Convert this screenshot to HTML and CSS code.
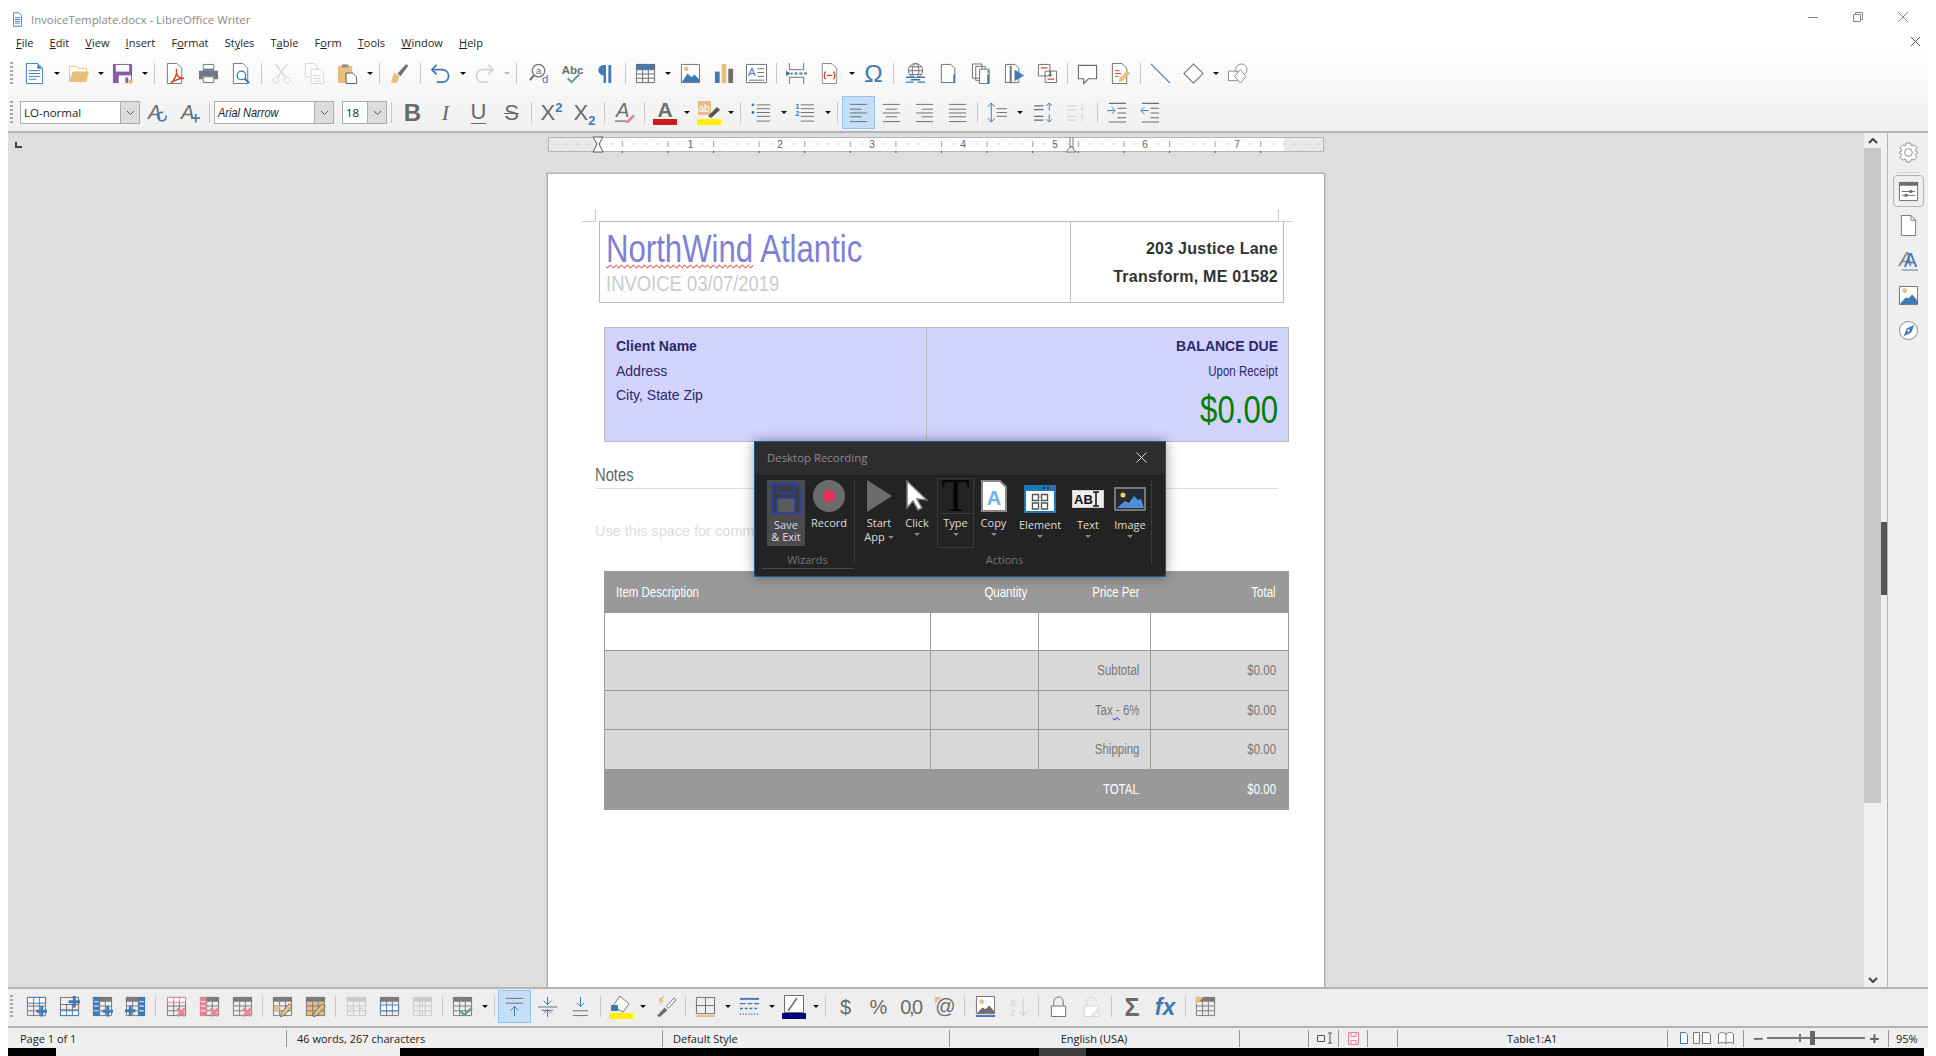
FILE: index.html
```html
<!DOCTYPE html>
<html lang="en">
<head>
<meta charset="utf-8">
<title>InvoiceTemplate.docx - LibreOffice Writer</title>
<link rel="stylesheet" href="styles.css">
</head>
<body>

<svg class="defs" aria-hidden="true">
  <symbol id="grid" viewBox="0 0 22 22"><path d="M1.5 1.500h19v19h-19zM1.5 9h19M1.5 14.500h19M8 8v12.500M14 8v12.500" fill="none" stroke="#6e6e6e"/></symbol>
  <symbol id="hgrid" viewBox="0 0 22 22"><path d="M1 1h20v5H1z" fill="#7a7a7a"/><path d="M1.5 1.500h19v19h-19zM1.5 10.500h19M1.5 15.500h19M8 6v14.500M14 6v14.500" fill="none" stroke="#7a7a7a"/></symbol>
  <symbol id="plus" viewBox="0 0 22 22"><path d="M11 16h11M16.500 10.500v11" stroke="#3f7ab5" stroke-width="3"/></symbol>
  <symbol id="cross" viewBox="0 0 22 22"><path d="M12 13l8 8M20 13l-8 8" stroke="#e8829a" stroke-width="3"/></symbol>
  <symbol id="brush" viewBox="0 0 22 22"><path d="M21 11l-8 9-4 2 1-5 8-9z" fill="#e8bf7f" stroke="#6e6e6e"/></symbol>
</svg>

<div class="app">
  <div class="top">
    <div class="titlebar">
      <svg class="appicon" viewBox="0 0 10 16"><path d="M.5.5h6l3 3v12H.5z" fill="#fff" stroke="#2f7fc1"/><path d="M2 6h6M2 8h6M2 10h6M2 12h6" stroke="#2f7fc1"/></svg>
      <span class="titletext">InvoiceTemplate.docx - LibreOffice Writer</span>
      <span class="wincontrols">
        <svg width="10" height="10"><path d="M0 5.500h10" stroke="#888"/></svg>
        <svg width="10" height="10"><path d="M.5 2.500h7v7h-7zM2.500 2.500v-2h7v7h-2" fill="none" stroke="#888"/></svg>
        <svg width="10" height="10"><path d="M0 0l10 10M10 0L0 10" stroke="#888"/></svg>
      </span>
    </div>
    <div class="menubar">
      <span class="menu"><u>F</u>ile</span><span class="menu"><u>E</u>dit</span><span class="menu"><u>V</u>iew</span><span class="menu"><u>I</u>nsert</span><span class="menu">F<u>o</u>rmat</span><span class="menu">St<u>y</u>les</span><span class="menu">T<u>a</u>ble</span><span class="menu">F<u>o</u>rm</span><span class="menu"><u>T</u>ools</span><span class="menu"><u>W</u>indow</span><span class="menu"><u>H</u>elp</span>
      <svg class="docclose" width="9" height="9"><path d="M0 0l9 9M9 0L0 9" stroke="#555"/></svg>
    </div>

    <div class="tb tb1">
      <span class="grip"></span>
      <span class="btn"><svg class="i" viewBox="0 0 22 22"><path d="M2.500 .5h12l5 5v16h-17z" fill="#fff" stroke="#3f7ab5"/><path d="M14 1v5h5z" fill="#3f7ab5"/><path d="M5 8h12M5 11h12M5 14h12M5 17h8" stroke="#3f7ab5"/></svg></span><span class="arr"></span>
      <span class="btn"><svg class="i" viewBox="0 0 22 22"><path d="M1.500 19V3.500h7l2 2h9V19" fill="#fff" stroke="#e8bf7f"/><path d="M5 9h17l-3 11H1z" fill="#e8bf7f"/></svg></span><span class="arr"></span>
      <span class="btn"><svg class="i" viewBox="0 0 22 22"><path d="M1 1h20v20H1z" fill="#8a5ca8"/><path d="M4 2h14v7H4z" fill="#fff"/><path d="M7 13h13v8H7z" fill="#fff"/><path d="M14 15h3v6h-3z" fill="#8a5ca8"/><circle cx="19.500" cy="19.500" r="2.500" fill="#e8bf7f"/></svg></span><span class="arr"></span><span class="sep"></span>
      <span class="btn"><svg class="i" viewBox="0 0 22 22"><path d="M2.500 .5h10l5 5v16h-15z" fill="#fff" stroke="#777"/><path d="M12 6v5M12 11c-1 4-3 8-6 10 3-2 8-5 14-5-4 0-7-2-8-5z" fill="none" stroke="#d9442b" stroke-width="1.500"/></svg></span>
      <span class="btn"><svg class="i" viewBox="0 0 22 22"><path d="M5.500 1.500h11v7h-11z" fill="#fff" stroke="#6e6e6e"/><path d="M6 6h10v2H6z" fill="#3f7ab5"/><path d="M1 8h20v9h-4v-3H5v3H1z" fill="#777"/><path d="M5.500 14.500h11v6h-11z" fill="#fff" stroke="#6e6e6e"/></svg></span>
      <span class="btn"><svg class="i" viewBox="0 0 22 22"><path d="M2.500 .5h10l5 5v16h-15z" fill="#fff" stroke="#777"/><circle cx="11" cy="13" r="4.500" fill="#fff" stroke="#3f7ab5" stroke-width="1.400"/><path d="M14 16l5 5" stroke="#3f7ab5" stroke-width="2"/></svg></span><span class="sep"></span>
      <span class="btn"><svg class="i" viewBox="0 0 22 22"><g fill="none" stroke="#d4d4d4" stroke-width="1.300"><path d="M5 1l10 14M17 1L7 15"/><circle cx="5" cy="18" r="3" stroke-dasharray="2 1"/><circle cx="17" cy="18" r="3" stroke-dasharray="2 1"/></g></svg></span>
      <span class="btn"><svg class="i" viewBox="0 0 22 22"><g fill="#fff" stroke="#d4d4d4"><path d="M1.500 .5h9l3 3v11h-12z"/><path d="M7.500 6.500h9l4 4v11h-13z"/><path d="M10 13h8M10 16h8M10 19h8"/></g></svg></span>
      <span class="btn"><svg class="i" viewBox="0 0 22 22"><path d="M1 3h15v18H1z" fill="#e8bf7f"/><path d="M5 1.500h7v3H5z" fill="#8a8a8a"/><path d="M9.500 10.500h7l4 4v7h-11z" fill="#fff" stroke="#555"/></svg></span><span class="arr"></span><span class="sep"></span>
      <span class="btn"><svg class="i" viewBox="0 0 22 22"><path d="M4 10l6 4-3 7H1z" fill="#e8bf7f"/><path d="M8 11l9-10 2 2-8 11z" fill="#6e6e6e"/></svg></span><span class="sep"></span>
      <span class="btn"><svg class="i" viewBox="0 0 22 22"><path d="M7 2L2 7l5 5" fill="none" stroke="#3f7ab5" stroke-width="1.800"/><path d="M2 7h11a6.500 6.500 0 0 1 0 13H7" fill="none" stroke="#3f7ab5" stroke-width="1.800"/></svg></span><span class="arr"></span>
      <span class="btn"><svg class="i" viewBox="0 0 22 22"><path d="M15 2l5 5-5 5" fill="none" stroke="#d4d4d4" stroke-width="1.800"/><path d="M20 7H9a6.500 6.500 0 0 0 0 13h6" fill="none" stroke="#d4d4d4" stroke-width="1.800"/></svg></span><span class="arr off"></span><span class="sep sep-f"></span>
      <span class="btn"><svg class="i" viewBox="0 0 22 22"><circle cx="10" cy="8" r="6.500" fill="none" stroke="#6e6e6e" stroke-width="1.200"/><path d="M5 13l-4 5" stroke="#6e6e6e" stroke-width="2.200"/><text x="10" y="11" class="glyph small" fill="#6e6e6e">a</text><text x="17" y="21" class="glyph" fill="#3f7ab5">d</text></svg></span>
      <span class="btn"><svg class="i" viewBox="0 0 22 22"><text x="11" y="11" class="glyph spell" fill="#6e6e6e">Abc</text><path d="M6 16l4 4 8-8" fill="none" stroke="#5f9f86" stroke-width="2"/></svg></span>
      <span class="btn"><svg class="i" viewBox="0 0 22 22"><path d="M9 2a5.500 5.500 0 0 0 0 11v8h2.500V2zM14 2h3v19h-3z" fill="#3f7ab5"/></svg></span><span class="sep"></span>
      <span class="btn"><svg class="i" viewBox="0 0 22 22"><path d="M1 1h20v6H1z" fill="#3f7ab5"/><path d="M1.500 1.500h19v19h-19zM1.500 7h19M1.500 11.500h19M1.500 16h19M8 7v13.500M14 7v13.500" fill="none" stroke="#6e6e6e"/></svg></span><span class="arr"></span>
      <span class="m1"></span>
      <span class="btn"><svg class="i" viewBox="0 0 22 22"><path d="M1.500 1.500h19v19h-19z" fill="#fff" stroke="#6e6e6e"/><circle cx="6.500" cy="6" r="2.500" fill="#e8bf7f"/><path d="M2 20l6-9 4 4 3-3 5 5v3z" fill="#3f7ab5"/></svg></span>
      <span class="btn"><svg class="i" viewBox="0 0 22 22"><path d="M2 9h5v12H2z" fill="#3f7ab5"/><path d="M9 1h5v20H9z" fill="#e8bf7f"/><path d="M16 6h5v15h-5z" fill="#6e6e6e"/></svg></span>
      <span class="btn"><svg class="i" viewBox="0 0 22 22"><path d="M.5 1.500h21v19H.5z" fill="#fff" stroke="#6e6e6e"/><text x="6" y="14" class="glyph" fill="#3f7ab5">A</text><path d="M12 6h7M12 10h7M12 14h7M3 18h16" stroke="#6e6e6e"/></svg></span><span class="sep"></span>
      <span class="btn"><svg class="i" viewBox="0 0 22 22"><path d="M3.500 0v7h15V0M3.500 22v-7h15v7" fill="none" stroke="#6e6e6e"/><path d="M0 8l5 3-5 3z" fill="#3f7ab5"/><path d="M5 11h2M9 11h3M14 11h3M19 11h3" stroke="#3f7ab5" stroke-width="2"/></svg></span>
      <span class="btn"><svg class="i" viewBox="0 0 22 22"><path d="M3.500 .5h10l5 5v16h-15z" fill="#fff" stroke="#888"/><path d="M7 9c-2 2-2 6 0 8M15 9c2 2 2 6 0 8M8 13h6" fill="none" stroke="#d9442b" stroke-width="1.400"/></svg></span><span class="arr"></span>
      <span class="btn"><svg class="i" viewBox="0 0 22 22"><text x="11" y="20" class="glyph omega" fill="#3f7ab5">Ω</text></svg></span><span class="sep"></span>
      <span class="m2"></span>
      <span class="btn"><svg class="i" viewBox="0 0 22 22"><g fill="none" stroke="#6e6e6e"><circle cx="11" cy="8" r="7.500"/><ellipse cx="11" cy="8" rx="3.500" ry="7.500"/><path d="M3.500 8h15M4.500 4h13M4.500 12h13"/></g><path d="M1 15h8M13 15h8M1 20h8M13 20h8M6 17.500h10" stroke="#3f7ab5" stroke-width="1.500"/></svg></span>
      <span class="btn"><svg class="i" viewBox="0 0 22 22"><path d="M3.500 1.500h10l4 4v15h-14z" fill="#fff" stroke="#6e6e6e"/><path d="M16 12h2v9h-2z" fill="#3f7ab5"/></svg></span>
      <span class="btn"><svg class="i" viewBox="0 0 22 22"><path d="M1.500 1h10v15h-10zM5 3.500h10v15H5z" fill="#fff" stroke="#6e6e6e"/><path d="M9 6.500h10v15H9z" fill="#fff" stroke="#6e6e6e"/><path d="M17 12h2v9h-2zM17 8h2v2h-2z" fill="#3f7ab5"/></svg></span>
      <span class="btn"><svg class="i" viewBox="0 0 22 22"><path d="M1.500 1.500h10l4 4v15h-14z" fill="#fff" stroke="#6e6e6e"/><path d="M7 3v18" stroke="#6e6e6e" stroke-width="2"/><path d="M11 7l10 6-10 6z" fill="#3f7ab5"/></svg></span>
      <span class="btn"><svg class="i" viewBox="0 0 22 22"><path d="M1.500 1.500h12v12h-12zM8.500 8.500h12v12h-12z" fill="#fff" stroke="#6e6e6e"/><path d="M4 5h7M11 17h7" stroke="#d9442b" stroke-width="1.300"/><path d="M14 8v6M12 12l2 2 2-2" fill="none" stroke="#555"/></svg></span><span class="sep"></span>
      <span class="btn"><svg class="i" viewBox="0 0 22 22"><path d="M1.500 2.500h19v14H12l-5 5v-5H1.500z" fill="#fff" stroke="#6e6e6e" stroke-width="1.200"/></svg></span>
      <span class="btn"><svg class="i" viewBox="0 0 22 22"><path d="M2.500 .5h10l5 5v16h-15z" fill="#fff" stroke="#6e6e6e"/><path d="M5 8h5M5 11h7M5 14h4" stroke="#d9442b"/><path d="M9 20l1-4 8-8 3 3-8 8z" fill="#e8bf7f"/></svg></span><span class="sep"></span>
      <span class="btn"><svg class="i" viewBox="0 0 22 22"><path d="M1 1l20 20" stroke="#3f7ab5" stroke-width="1.200"/></svg></span>
      <span class="btn"><svg class="i" viewBox="0 0 22 22"><path d="M11 1l10 10-10 10L1 11z" fill="#fff" stroke="#888" stroke-width="1.300"/></svg></span><span class="arr"></span>
      <span class="btn"><svg class="i" viewBox="0 0 22 22"><circle cx="15" cy="7" r="6" fill="#fff" stroke="#888"/><path d="M1.500 8.500h10v10h-10z" fill="#fff" stroke="#888"/><path d="M14 7l6 7-6 7-6-7z" fill="#fff" stroke="#888"/></svg></span>
    </div>

    <div class="tb tb2">
      <span class="grip"></span>
      <span class="combo c-style"><span class="combotext">LO-normal</span><span class="drop"><svg width="9" height="6"><path d="M1 1l3.500 3.500L8 1" fill="none" stroke="#555"/></svg></span></span>
      <span class="btn"><svg class="i" viewBox="0 0 22 22"><text x="9" y="18" class="glyph big ital" fill="#6e6e6e">A</text><path d="M21 14a4.500 4.500 0 1 1-3-3" fill="none" stroke="#3f7ab5" stroke-width="1.600"/></svg></span>
      <span class="btn"><svg class="i" viewBox="0 0 22 22"><text x="9" y="18" class="glyph big ital" fill="#6e6e6e">A</text><path d="M13 17h9M17.500 12.500v9" stroke="#3f7ab5" stroke-width="1.800"/></svg></span><span class="sep"></span>
      <span class="combo c-font"><span class="combotext fontname"><span class="fn">Arial Narrow</span></span><span class="drop"><svg width="9" height="6"><path d="M1 1l3.500 3.500L8 1" fill="none" stroke="#555"/></svg></span></span>
      <span class="combo c-size"><span class="combotext">18</span><span class="drop"><svg width="9" height="6"><path d="M1 1l3.500 3.500L8 1" fill="none" stroke="#555"/></svg></span></span>
      <span class="sep sep-s"></span>
      <span class="btn"><span class="fmt fmt-b">B</span></span>
      <span class="btn"><span class="fmt fmt-i">I</span></span>
      <span class="btn"><span class="fmt fmt-u">U</span></span>
      <span class="btn"><span class="fmt fmt-s">S</span></span><span class="sep"></span>
      <span class="btn"><span class="fmt fmt-x">X<sup>2</sup></span></span>
      <span class="btn"><span class="fmt fmt-x">X<sub>2</sub></span></span><span class="sep"></span>
      <span class="btn"><svg class="i" viewBox="0 0 22 22"><text x="9" y="16" class="glyph big ital" fill="#6e6e6e">A</text><path d="M1 20h12" stroke="#6e6e6e" stroke-width="1.300"/><path d="M13 20l7-7 2 2-7 7h-3z" fill="#e8829a"/></svg></span><span class="sep"></span>
      <span class="btn"><svg class="i wide" viewBox="0 0 24 24"><text x="12" y="16" class="glyph big bold" fill="#6e6e6e">A</text><path d="M0 18h24v6H0z" fill="#cc1a1a"/></svg></span><span class="arr"></span>
      <span class="btn"><svg class="i wide" viewBox="0 0 24 24"><path d="M1 0h13v14H1z" fill="#e8bf7f"/><text x="7" y="11" class="glyph small" fill="#fff">ab</text><path d="M11 15l9-9 3 3-9 8z" fill="#555"/><path d="M0 18h24v6H0z" fill="#ffef00"/></svg></span><span class="arr"></span><span class="sep"></span>
      <span class="btn"><svg class="i" viewBox="0 0 22 22"><circle cx="2" cy="3" r="1.500" fill="#3f7ab5"/><circle cx="2" cy="11" r="1.500" fill="#3f7ab5"/><path d="M6 3h14M6 7h14M6 11h14M6 15h14M6 20h14" stroke="#6e6e6e"/></svg></span><span class="arr"></span>
      <span class="btn"><svg class="i" viewBox="0 0 22 22"><text x="2.500" y="7" class="glyph tiny bold" fill="#3f7ab5">1</text><text x="2.500" y="15" class="glyph tiny bold" fill="#3f7ab5">2</text><path d="M6 3h14M6 7h14M6 11h14M6 15h14M6 20h14" stroke="#6e6e6e"/></svg></span><span class="arr"></span><span class="sep"></span>
      <span class="btn on"><svg class="i" viewBox="0 0 22 22"><path d="M2 2.500h18M2 7.500h12M2 11.500h18M2 15.500h12M2 20.500h18" stroke="#6e6e6e"/></svg></span>
      <span class="btn"><svg class="i" viewBox="0 0 22 22"><path d="M2 2.500h18M5 7.500h12M2 11.500h18M5 15.500h12M2 20.500h18" stroke="#6e6e6e"/></svg></span>
      <span class="btn"><svg class="i" viewBox="0 0 22 22"><path d="M2 2.500h18M8 7.500h12M2 11.500h18M8 15.500h12M2 20.500h18" stroke="#6e6e6e"/></svg></span>
      <span class="btn"><svg class="i" viewBox="0 0 22 22"><path d="M2 2.500h18M2 7.500h18M2 11.500h18M2 15.500h18M2 20.500h18" stroke="#6e6e6e"/></svg></span><span class="sep"></span>
      <span class="btn"><svg class="i" viewBox="0 0 22 22"><path d="M10 7h11M10 11h11M10 15h11" stroke="#6e6e6e"/><path d="M4.500 1v20M1 5l3.500-4L8 5M1 17l3.500 4L8 17" fill="none" stroke="#3f7ab5"/></svg></span><span class="arr"></span>
      <span class="m3"></span>
      <span class="btn"><svg class="i" viewBox="0 0 22 22"><path d="M0 4h10M0 8h10M0 15h10M0 19h10" stroke="#6e6e6e" stroke-width="1.300"/><path d="M16 9V1M13 4l3-3 3 3M16 13v8M13 18l3 3 3-3" fill="none" stroke="#3f7ab5"/></svg></span>
      <span class="btn"><svg class="i" viewBox="0 0 22 22"><path d="M0 4h10M0 8h10M0 15h10M0 19h10" stroke="#d4d4d4" stroke-width="1.300"/><path d="M16 1v8M13 6l3 3 3-3M16 21v-8M13 16l3-3 3 3" fill="none" stroke="#d4d4d4"/></svg></span><span class="sep"></span>
      <span class="btn"><svg class="i" viewBox="0 0 22 22"><path d="M2 1.500h18M11 6.500h9M11 11.500h9M11 16.500h9M2 21h18" stroke="#6e6e6e" stroke-width="1.200"/><path d="M0 9h8M5 5.500L8.500 9 5 12.500" fill="none" stroke="#3f7ab5"/></svg></span>
      <span class="btn"><svg class="i" viewBox="0 0 22 22"><path d="M2 1.500h18M11 6.500h9M11 11.500h9M11 16.500h9M2 21h18" stroke="#6e6e6e" stroke-width="1.200"/><path d="M9 9H1M4.500 5.500L1 9l3.500 3.500" fill="none" stroke="#3f7ab5"/></svg></span>
    </div>
  </div>

  <div class="main">
    <div class="canvas">
      <div class="rulerrow">
        <svg class="corner" width="8" height="8"><path d="M1 1v5h6" fill="none" stroke="#444" stroke-width="2"/></svg>
        <svg class="ruler" width="776" height="17" viewBox="0 0 776 17">
          <defs>
            <pattern id="dots" x="5.400" width="11.400" height="17" patternUnits="userSpaceOnUse"><path d="M1 7.500v1" stroke="#888"/></pattern>
            <pattern id="tick" x="28.200" width="45.600" height="17" patternUnits="userSpaceOnUse"><path d="M.5 5v6" stroke="#aaa"/><path d="M.5 15v2" stroke="#555"/></pattern>
          </defs>
          <rect x=".5" y="1.500" width="775" height="14" fill="#e9e9e9" stroke="#b5b5b5"/>
          <rect x="51" y="2" width="685" height="13" fill="#fff"/>
          <rect x="1" y="2" width="774" height="13" fill="url(#dots)"/>
          <rect x="51" y="0" width="685" height="17" fill="url(#tick)"/>
          <g class="rulernum">
            <text x="142.500" y="12">1</text><text x="232" y="12">2</text><text x="324" y="12">3</text><text x="415" y="12">4</text><text x="507" y="12">5</text><text x="597" y="12">6</text><text x="689" y="12">7</text>
          </g>
          <path d="M45 1h10l-4 7 4 8H45l4-8z" fill="#fff" stroke="#555"/>
          <path d="M522 1v11M525 1v11M518 16l5-6 5 6z" fill="#eee" stroke="#777"/>
        </svg>
      </div>

      <div class="sheet">
        <span class="crop crop-l"></span><span class="crop crop-r"></span>

        <div class="headbox">
          <div class="headleft">
            <div class="company"><span class="nw"><span class="squiggle">NorthWind</span> Atlantic</span></div>
            <div class="invoice"><span class="nw">INVOICE 03/07/2019</span></div>
          </div>
          <div class="headright">
            <div class="addr">203 Justice Lane</div>
            <div class="addr">Transform, ME 01582</div>
          </div>
        </div>

        <div class="clientbox">
          <div class="clientleft">
            <div class="cname">Client Name</div>
            <div class="cline">Address</div>
            <div class="cline">City, State Zip</div>
          </div>
          <div class="clientright">
            <div class="cname">BALANCE DUE</div>
            <div class="cline receipt"><span class="nwr">Upon Receipt</span></div>
            <div class="amount"><span class="nwr">$0.00</span></div>
          </div>
        </div>

        <div class="notes"><span class="nw">Notes</span></div>
        <div class="notehint">Use this space for comments</div>

        <table class="items">
          <colgroup><col class="col1"><col class="col2"><col class="col3"><col class="col4"></colgroup>
          <tr class="rowhead"><td><span class="nw">Item Description</span></td><td class="r"><span class="nwr">Quantity</span></td><td class="r"><span class="nwr">Price Per</span></td><td class="r"><span class="nwr">Total</span></td></tr>
          <tr class="rowblank"><td></td><td></td><td></td><td></td></tr>
          <tr class="rowgray"><td></td><td></td><td class="r"><span class="nwr">Subtotal</span></td><td class="r"><span class="nwr">$0.00</span></td></tr>
          <tr class="rowgray"><td></td><td></td><td class="r"><span class="nwr">Tax<span class="squiggle-b"> -</span> 6%</span></td><td class="r"><span class="nwr">$0.00</span></td></tr>
          <tr class="rowgray"><td></td><td></td><td class="r"><span class="nwr">Shipping</span></td><td class="r"><span class="nwr">$0.00</span></td></tr>
          <tr class="rowtotal"><td></td><td></td><td class="r"><span class="nwr">TOTAL</span></td><td class="r"><span class="nwr">$0.00</span></td></tr>
        </table>
      </div>
    </div>

    <div class="vscroll">
      <span class="sbtn"><svg width="10" height="6"><path d="M1 5l4-4 4 4" fill="none" stroke="#444" stroke-width="2"/></svg></span>
      <span class="sthumb"></span>
      <span class="strack"></span>
      <span class="sbtn sbtn-d"><svg width="10" height="6"><path d="M1 1l4 4 4-4" fill="none" stroke="#444" stroke-width="2"/></svg></span>
    </div>
    <div class="sidegrip"><span class="gripbar"></span></div>
    <div class="sidebar">
      <span class="sbi"><svg class="i" viewBox="0 0 22 22"><path d="M9 1h4l1 3 3-1 3 3-2 3 3 2v0l-3 2 2 3-3 3-3-1-1 3H9l-1-3-3 1-3-3 2-3-3-2 3-2-2-3 3-3 3 1z" fill="#fff" stroke="#888"/><circle cx="11" cy="11" r="4" fill="#fff" stroke="#888"/></svg></span>
      <span class="sbline"></span>
      <span class="sbi sbi-on"><svg class="i" viewBox="0 0 22 22"><path d="M1.500 1.500h19v19h-19z" fill="#fff" stroke="#6e6e6e"/><path d="M1 1h20v4H1z" fill="#6e6e6e"/><path d="M4 11h14M4 15h14" stroke="#6e6e6e"/><path d="M12 9.500h3v3h-3zM7 13.500h3v3H7z" fill="#6e6e6e"/></svg></span>
      <span class="sbi"><svg class="i" viewBox="0 0 22 22"><path d="M3.500 .5h10l5 5v16h-15z" fill="#fff" stroke="#777"/><path d="M13.500 .5v5h5" fill="none" stroke="#777"/></svg></span>
      <span class="sbi"><svg class="i" viewBox="0 0 22 22"><text x="8" y="17" class="glyph big ital" fill="#888">A</text><text x="13" y="18" class="glyph big" fill="#3f7ab5">A</text><path d="M4 21h17" stroke="#3f7ab5"/></svg></span>
      <span class="sbi"><svg class="i" viewBox="0 0 22 22"><path d="M1.500 1.500h19v19h-19z" fill="#fff" stroke="#6e6e6e"/><circle cx="7" cy="6" r="2.500" fill="#e8bf7f"/><path d="M2 20l6-7 3 1 4-4 5 6v4z" fill="#3f7ab5"/></svg></span>
      <span class="sbi"><svg class="i" viewBox="0 0 22 22"><circle cx="11" cy="11" r="9.500" fill="#fff" stroke="#888"/><path d="M17 5l-3 8-8 4 3-8z" fill="#3f7ab5"/><circle cx="11" cy="11" r="1.300" fill="#fff"/></svg></span>
    </div>
  </div>

  <div class="tb tb3">
    <span class="grip"></span>
    <span class="btn"><svg class="i" viewBox="0 0 22 22"><use href="#hgrid"/><path d="M1.500 1.500h19v6h-19zM8 1.500v6M14 1.500v6" fill="#fff" stroke="#3f7ab5"/><use href="#plus"/></svg></span>
    <span class="btn"><svg class="i" viewBox="0 0 22 22"><use href="#grid"/><path d="M1.500 15.500h19v5h-19zM8 15.500v5M14 15.500v5" fill="#fff" stroke="#3f7ab5"/><path d="M10 6h12M16 0v12" stroke="#3f7ab5" stroke-width="3"/></svg></span>
    <span class="btn"><svg class="i" viewBox="0 0 22 22"><use href="#hgrid"/><path d="M1 1h7v20H1z" fill="#3f7ab5"/><path d="M2 6h5M2 10.500h5M2 15.500h5" stroke="#fff"/><use href="#plus"/></svg></span>
    <span class="btn"><svg class="i" viewBox="0 0 22 22"><use href="#hgrid"/><path d="M14 1h7v20h-7z" fill="#3f7ab5"/><path d="M15 6h5M15 10.500h5M15 15.500h5" stroke="#fff"/><path d="M0 15.500h11M5.500 10v11" stroke="#3f7ab5" stroke-width="3"/></svg></span><span class="sep sep-w"></span>
    <span class="btn"><svg class="i" viewBox="0 0 22 22"><use href="#hgrid"/><path d="M1.500 1.500h19v5h-19zM8 1.500v5M14 1.500v5" fill="#fff" stroke="#e8829a"/><use href="#cross"/></svg></span>
    <span class="btn"><svg class="i" viewBox="0 0 22 22"><use href="#hgrid"/><path d="M1 1h7v20H1z" fill="#e8829a"/><path d="M2 6h5M2 10.500h5M2 15.500h5" stroke="#fff"/><use href="#cross"/></svg></span>
    <span class="btn"><svg class="i" viewBox="0 0 22 22"><use href="#hgrid"/><use href="#cross"/></svg></span><span class="sep"></span>
    <span class="btn"><svg class="i" viewBox="0 0 22 22"><use href="#hgrid"/><path d="M2 10.500h6v5H2z" fill="#e8bf7f"/><use href="#brush"/></svg></span>
    <span class="btn"><svg class="i" viewBox="0 0 22 22"><path d="M1 6h20v15H1z" fill="#e8bf7f"/><use href="#hgrid"/><use href="#brush"/></svg></span><span class="sep"></span>
    <span class="btn dim"><svg class="i" viewBox="0 0 22 22"><use href="#hgrid"/><path d="M4 13h5M18 13h-5" stroke="#6e6e6e"/></svg></span>
    <span class="btn"><svg class="i" viewBox="0 0 22 22"><use href="#hgrid"/><path d="M1.500 9.500h19v6h-19zM8 9.500v6M14 9.500v6" fill="#fff" stroke="#3f7ab5"/></svg></span>
    <span class="btn dim"><svg class="i" viewBox="0 0 22 22"><use href="#hgrid"/><path d="M11 7v5M11 20v-5" stroke="#6e6e6e"/></svg></span><span class="sep"></span>
    <span class="btn"><svg class="i" viewBox="0 0 22 22"><use href="#hgrid"/><path d="M9 16l4 4 8-8" fill="none" stroke="#5f9f86" stroke-width="2.200"/></svg></span><span class="arr"></span><span class="sep"></span>
    <span class="btn on"><svg class="i" viewBox="0 0 22 22"><path d="M2 2.500h18M2 7.500h18" stroke="#6e6e6e"/><path d="M11 21V11M7 15l4-4 4 4" fill="none" stroke="#3f7ab5"/></svg></span>
    <span class="btn"><svg class="i" viewBox="0 0 22 22"><path d="M1 11.500h20M5 15h12" stroke="#6e6e6e"/><path d="M11 1v8M7 5l4 4 4-4M11 22v-7M7 18l4-4 4 4" fill="none" stroke="#3f7ab5"/></svg></span>
    <span class="btn"><svg class="i" viewBox="0 0 22 22"><path d="M3 15.500h16M3 20.500h16" stroke="#6e6e6e"/><path d="M11 1v10M7 7l4 4 4-4" fill="none" stroke="#3f7ab5"/></svg></span><span class="sep"></span>
    <span class="btn"><svg class="i wide" viewBox="0 0 24 24"><path d="M11 1l9 8-6 8-10-6z" fill="#fff" stroke="#777"/><path d="M2 10h7v6H2z" fill="#3f7ab5"/><path d="M0 18h24v6H0z" fill="#ffef00"/></svg></span><span class="arr"></span>
    <span class="btn"><svg class="i" viewBox="0 0 22 22"><path d="M5 2l5-2-3 5 3-1-6 6 2-5-3 1z" fill="#e8bf7f"/><path d="M2 21l8-9 3 3-8 7z" fill="#6e6e6e"/><path d="M12 11l8-9 2 2-8 9z" fill="#fff" stroke="#6e6e6e"/></svg></span><span class="sep"></span>
    <span class="btn"><svg class="i" viewBox="0 0 22 22"><path d="M1.500 1.500h19v17h-19zM11 1.500v17M1.500 10h19" fill="none" stroke="#6e6e6e"/><path d="M1 20h20v2H1z" fill="#e8bf7f"/></svg></span><span class="arr"></span>
    <span class="btn"><svg class="i" viewBox="0 0 22 22"><path d="M1 3h20" stroke="#3f7ab5" stroke-width="2"/><path d="M1 8h6M9 8h5M16 8h5M1 13h3M6 13h3M11 13h3M16 13h3" stroke="#3f7ab5" stroke-width="1.500"/><path d="M1 19h1M4 19h1M7 19h1M10 19h1M13 19h1M16 19h1M19 19h1" stroke="#3f7ab5" stroke-width="2"/></svg></span><span class="arr"></span>
    <span class="btn"><svg class="i wide" viewBox="0 0 24 24"><path d="M2.500 .5h19v17h-19z" fill="#fff" stroke="#6e6e6e"/><path d="M6 16l9-13" stroke="#6e6e6e" stroke-width="1.500"/><path d="M0 18h24v6H0z" fill="#000080"/></svg></span><span class="arr"></span><span class="sep"></span>
    <span class="btn"><span class="fmt fmt-cur">$</span></span>
    <span class="btn"><span class="fmt fmt-cur">%</span></span>
    <span class="btn"><span class="fmt fmt-cur fmt-zero">0,0</span></span>
    <span class="btn"><svg class="i" viewBox="0 0 22 22"><path d="M1 1h7L1 8z" fill="#e8bf7f"/><text x="12" y="18" class="glyph big" fill="#6e6e6e">@</text></svg></span><span class="sep"></span>
    <span class="btn"><svg class="i" viewBox="0 0 22 22"><path d="M1.500 .5h19v18h-19z" fill="#fff" stroke="#6e6e6e"/><circle cx="7" cy="6" r="2.500" fill="#e8bf7f"/><path d="M2 18l6-6 3 2 4-4 5 6v2z" fill="#6e6e6e"/><path d="M1 21h20" stroke="#3f7ab5" stroke-width="2"/></svg></span>
    <span class="btn"><svg class="i" viewBox="0 0 22 22"><text x="5" y="10" class="glyph" fill="#d4d4d4">a</text><text x="5" y="21" class="glyph" fill="#d4d4d4">z</text><path d="M16 1v19M12 16l4 4 4-4" fill="none" stroke="#d4d4d4" stroke-width="1.200"/></svg></span><span class="sep"></span>
    <span class="btn"><svg class="i" viewBox="0 0 22 22"><path d="M3.500 10.500h15v11h-15z" fill="#fff" stroke="#6e6e6e"/><path d="M6 10V6a5 5 0 0 1 10 0v4" fill="none" stroke="#6e6e6e"/></svg></span>
    <span class="btn"><svg class="i" viewBox="0 0 22 22"><path d="M3.500 10.500h15v11h-15z" fill="#fff" stroke="#d4d4d4"/><path d="M6 10V6a5 5 0 0 1 10 0" fill="none" stroke="#d4d4d4"/><path d="M10 20l8-8 3 3-8 7z" fill="#e6e6e6"/></svg></span><span class="sep"></span>
    <span class="btn"><span class="fmt fmt-sum">Σ</span></span>
    <span class="btn"><span class="fmt fmt-fx">fx</span></span><span class="sep"></span>
    <span class="btn"><svg class="i" viewBox="0 0 22 22"><use href="#hgrid"/><path d="M1 1h8L1 9z" fill="#e8bf7f"/></svg></span>
  </div>

  <div class="status">
    <span class="field f1">Page 1 of 1</span>
    <span class="field f2">46 words, 267 characters</span>
    <span class="field f3">Default Style</span>
    <span class="field f4 mid">English (USA)</span>
    <span class="field f5"></span>
    <span class="field f6"><svg width="16" height="12" viewBox="0 0 16 12"><path d="M.5 3.500h7v6h-7zM11 1h4M13 1v10M11 11h4" fill="none" stroke="#555"/></svg></span>
    <span class="field f7"><svg width="11" height="13" viewBox="0 0 11 13"><path d="M.5.5h10v12H.5zM3 .5v4h5v-4M3 12.500v-4h5v4" fill="none" stroke="#e8829a"/></svg></span>
    <span class="field f8"></span>
    <span class="field f9 mid">Table1:A1</span>
    <span class="field f10"><svg width="56" height="12" viewBox="0 0 56 12"><path d="M2.500.5h5l2 2v9h-7z" fill="#fff" stroke="#3f7ab5"/><path d="M15.500.5h6v11h-6zM24.500.5h6l2 2v9h-8z" fill="#fff" stroke="#777"/><path d="M40.500 2c3-2 5-2 7.500 0 2.500-2 5-2 7.500 0v9.500c-2.500-1.500-5-1.500-7.500 0-2.500-1.500-4.500-1.500-7.500 0zM48 2v9" fill="#fff" stroke="#777"/></svg></span>
    <span class="field f11"><span class="zbtn">−</span><span class="zslider"><span class="ztick"></span><span class="zthumb"></span></span><span class="zbtn">+</span></span>
    <span class="field f12">95%</span>
  </div>

  <div class="taskbar"><span class="tk tk-black"></span><span class="tk tk-light"></span><span class="tk tk-black2"></span><span class="tk tk-gray"></span><span class="tk tk-clock">3:48 PM</span></div>
</div>

<div class="recorder">
  <div class="rechead"><span>Desktop Recording</span><svg width="11" height="11"><path d="M.5.5l10 10M10.500.5l-10 10" stroke="#ddd"/></svg></div>
  <div class="recbody">
    <div class="recgroup">
      <div class="rectools">
        <div class="tool t-save"><svg class="ti" width="30" height="31" viewBox="0 0 30 31"><path d="M1 1h24l4 4v25H1z" fill="#3b3b46" stroke="#2c3e9e" stroke-width="2"/><path d="M7 1h16v9H7z" fill="none" stroke="#2c3e9e" stroke-width="2"/><path d="M6 15h18v15H6z" fill="#5a5a5e" stroke="#2c3e9e" stroke-width="1.500"/></svg><span class="tl">Save<br>&amp; Exit</span></div>
        <div class="tool t-record"><svg class="ti" width="32" height="32"><circle cx="16" cy="16" r="16" fill="#6b6b6b"/><circle cx="16" cy="16" r="6" fill="#e8315a"/></svg><span class="tl">Record</span></div>
      </div>
      <div class="grouplabel under">Wizards</div>
    </div>
    <span class="recsep"></span>
    <div class="recgroup">
      <div class="rectools">
        <div class="tool t-start"><svg class="ti" width="25" height="32"><path d="M0 0l25 16L0 32z" fill="#6d6d6d"/></svg><span class="tl">Start<br>App<i class="da da-in"></i></span></div>
        <div class="tool t-click"><svg class="ti" width="22" height="32" viewBox="0 0 22 32"><path d="M1 1l20 19-10-1 5 9-4 2-5-9-6 7z" fill="#fff" stroke="#777" stroke-width="1.500"/></svg><span class="tl">Click</span><i class="da"></i></div>
        <div class="tool t-type"><span class="typeT">T</span><span class="typeline"></span><span class="tl">Type</span><i class="da"></i></div>
        <div class="tool t-copy"><svg class="ti" width="26" height="32" viewBox="0 0 26 32"><path d="M1 1h18l6 6v24H1z" fill="#fff" stroke="#888" stroke-width="2"/><text x="13" y="25" class="glyph copyA" fill="#6cb6e6">A</text></svg><span class="tl">Copy</span><i class="da"></i></div>
        <div class="tool t-element"><svg class="ti low" width="32" height="28" viewBox="0 0 32 28"><path d="M0 0h32v28H0z" fill="#1a78b8"/><path d="M2 6h28v20H2z" fill="#fff"/><circle cx="20" cy="3" r="1" fill="#222"/><circle cx="24" cy="3" r="1" fill="#222"/><circle cx="28" cy="3" r="1" fill="#e33"/><path d="M8.500 9.500h6v6h-6zM17.500 9.500h6v6h-6zM8.500 18h6v6h-6zM17.500 18h6v6h-6z" fill="#fff" stroke="#555" stroke-width="1.400"/></svg><span class="tl tl-low">Element</span><i class="da"></i></div>
        <div class="tool t-text"><svg class="ti low2" width="32" height="18" viewBox="0 0 32 18"><path d="M0 0h32v18H0z" fill="#ccc"/><path d="M1 1h30v16H1z" fill="#eee"/><text x="2" y="14" class="abi">AB</text><path d="M21 2h6M24 2v14M21 16h6" stroke="#111" stroke-width="1.500"/></svg><span class="tl tl-low">Text</span><i class="da"></i></div>
        <div class="tool t-image"><svg class="ti low3" width="32" height="24" viewBox="0 0 32 24"><path d="M0 0h32v24H0z" fill="#777"/><path d="M2 2h28v20H2z" fill="#262b33"/><circle cx="9" cy="8" r="2.500" fill="#f0cf6a"/><path d="M3 21l8-7 4 2 5-7 4 4 3-1 3 9z" fill="#4f8fd8"/></svg><span class="tl tl-low">Image</span><i class="da"></i></div>
      </div>
      <div class="grouplabel actions">Actions</div>
    </div>
    <span class="recsep"></span>
  </div>
</div>

</body>
</html>
```
FILE: styles.css
```css
/* window frame */
html, body
  {
	margin : 0;
	padding : 0;
	background-color : #FFFFFF;
  }
body
  {
	width : 1936px;
	height : 1056px;
	overflow : hidden;
	position : relative;
	font-family : "Open Sans", "Noto Sans", sans-serif;
	font-size : 11px;
	color : #222222;
  }
.defs
  {
	position : absolute;
	width : 0;
	height : 0;
  }
.app
  {
	margin-left : 8px;
	width : 1920px;
	height : 1056px;
	display : flex;
	flex-direction : column;
  }
.top
  {
	height : 131px;
	flex : none;
	border-bottom : 2px solid #B4B4B4;
	background : linear-gradient(#FFFFFF 0, #FFFFFF 45px, #F0F0F0 131px);
  }

/* title and menu */
.titlebar
  {
	height : 29px;
	box-sizing : border-box;
	display : flex;
	align-items : center;
	padding : 10px 0 0 5px;
	color : #8A8A8A;
	font-size : 11.400px;
  }
.appicon
  {
	width : 9px;
	height : 15px;
	margin-right : 9px;
  }
.wincontrols
  {
	margin : -5px 20px 0 auto;
	display : flex;
	gap : 35px;
  }
.wincontrols svg
  {
	display : block;
  }
.menubar
  {
	height : 27px;
	display : flex;
	align-items : center;
	padding-left : 8px;
	position : relative;
	font-size : 11px;
	color : #1E1E1E;
  }
.menu
  {
	margin-right : 16.200px;
  }
.docclose
  {
	position : absolute;
	right : 8px;
	top : 8px;
  }

/* toolbars */
.tb
  {
	display : flex;
	align-items : center;
	padding-left : 2px;
  }
.tb1
  {
	height : 34px;
  }
.tb1 .grip
  {
	margin-right : 5px;
  }
.tb2
  {
	height : 35px;
	margin-top : 5px;
  }
.tb3
  {
	height : 39px;
	flex : none;
	box-sizing : border-box;
	padding-bottom : 2px;
	background-color : #EEEEEE;
	border-top : 2px solid #B4B4B4;
  }
.grip
  {
	width : 3px;
	height : 23px;
	margin-right : 6px;
	background : repeating-linear-gradient(#A8A8A8 0, #A8A8A8 2px, transparent 2px, transparent 4px);
  }
.tb3 .grip
  {
	margin-right : 6.500px;
  }
.btn
  {
	width : 33px;
	height : 33px;
	flex : none;
	display : flex;
	align-items : center;
	justify-content : center;
	box-sizing : border-box;
  }
.btn.on
  {
	background-color : #C4DFF6;
	border : 1px solid #92C5F0;
  }
.btn.dim svg
  {
	opacity : 0.3;
  }
.i
  {
	width : 21px;
	height : 21px;
	display : block;
	overflow : visible;
  }
.i.wide
  {
	width : 24px;
	height : 24px;
  }
.arr
  {
	width : 11px;
	flex : none;
	display : flex;
	justify-content : center;
  }
.arr:before
  {
	content : "";
	border-left : 3px solid transparent;
	border-right : 3px solid transparent;
	border-top : 3px solid #111111;
  }
.arr.off:before
  {
	border-top-color : #BBBBBB;
  }
.sep
  {
	width : 1px;
	height : 21px;
	flex : none;
	margin : 0 3px;
	background-color : #C8C8C8;
  }
.arr + .sep
  {
	margin-left : 4px;
	margin-right : 4px;
  }
.arr + .sep-f
  {
	margin-right : 6px;
  }
.tb3 .sep
  {
	margin-left : 3.250px;
	margin-right : 3.250px;
  }
.tb3 .arr + .sep, .tb3 .sep-w
  {
	margin-left : 3.500px;
	margin-right : 3.500px;
  }
.sep-s
  {
	margin-left : 4px;
	margin-right : 4px;
  }
.m1
  {
	width : 1px;
	flex : none;
  }
.m2
  {
	width : 2px;
	flex : none;
  }
.m3
  {
	width : 3px;
	flex : none;
  }
.glyph
  {
	font-family : "Liberation Sans", sans-serif;
	font-size : 12px;
	text-anchor : middle;
  }
.glyph.tiny
  {
	font-size : 8px;
  }
.glyph.small
  {
	font-size : 10px;
  }
.glyph.spell
  {
	font-size : 12px;
	font-weight : bold;
  }
.glyph.big
  {
	font-size : 21px;
  }
.glyph.omega
  {
	font-size : 26px;
  }
.glyph.bold
  {
	font-weight : bold;
  }
.glyph.ital
  {
	font-style : italic;
  }
.combo
  {
	display : flex;
	flex : none;
	height : 23px;
	box-sizing : border-box;
	border : 1px solid #ACACAC;
	background-color : #FFFFFF;
	font-size : 11.500px;
	align-items : center;
  }
.c-style
  {
	width : 120px;
	margin-left : 1px;
  }
.c-font
  {
	width : 120px;
	margin-left : 1px;
  }
.c-size
  {
	width : 45px;
	margin-left : 8px;
  }
.combotext
  {
	flex : 1;
	padding-left : 3px;
	overflow : hidden;
	white-space : nowrap;
  }
.fn
  {
	display : inline-block;
	font-family : "Liberation Sans", sans-serif;
	font-size : 12.500px;
	font-style : italic;
	transform : scaleX(0.88);
	transform-origin : left center;
  }
.drop
  {
	width : 18px;
	height : 21px;
	display : flex;
	align-items : center;
	justify-content : center;
	background-color : #DCDCDC;
	border-left : 1px solid #ACACAC;
  }
.fmt
  {
	color : #6A6A6A;
	font-family : "Liberation Sans", sans-serif;
	font-size : 22px;
	line-height : 24px;
	white-space : nowrap;
  }
.fmt-b
  {
	font-weight : bold;
	font-size : 24px;
  }
.fmt-i
  {
	font-family : "Liberation Serif", serif;
	font-style : italic;
  }
.fmt-u
  {
	border-bottom : 1px solid #6A6A6A;
	line-height : 22px;
  }
.fmt-s
  {
	text-decoration : line-through;
	text-decoration-thickness : 1px;
  }
.fmt sup, .fmt sub
  {
	font-size : 13px;
	font-weight : bold;
	color : #3F7AB5;
	line-height : 0;
  }
.fmt-cur
  {
	font-size : 20px;
  }
.fmt-zero
  {
	letter-spacing : -2.500px;
	margin-left : -2px;
  }
.fmt-sum
  {
	font-weight : bold;
	font-size : 25px;
  }
.fmt-fx
  {
	font-family : "Liberation Sans", sans-serif;
	font-style : italic;
	font-weight : bold;
	font-size : 23px;
	color : #3F7AB5;
  }

/* document area */
.main
  {
	flex : 1;
	min-height : 0;
	display : flex;
  }
.canvas
  {
	width : 1856px;
	flex : none;
	background-color : #DEDEDE;
	overflow : hidden;
  }
.rulerrow
  {
	height : 17px;
	margin-top : 3px;
	display : flex;
	align-items : center;
  }
.corner
  {
	margin-left : 7px;
  }
.ruler
  {
	margin-left : 525px;
	display : block;
  }
.rulernum text
  {
	font-family : "Liberation Sans", sans-serif;
	font-size : 10px;
	fill : #666666;
	text-anchor : middle;
  }
.sheet
  {
	position : relative;
	box-sizing : border-box;
	width : 778px;
	height : 900px;
	margin : 20px 0 0 539px;
	padding : 47px 0 0 51px;
	background-color : #FFFFFF;
	border : solid #B0B0B0;
	border-width : 1px 1px 0 1px;
	box-shadow : -1px -1px 0 #C8C8C8, 1px 0 0 #C8C8C8;
	font-family : "Liberation Sans", sans-serif;
  }
.crop
  {
	position : absolute;
	top : 35px;
	width : 13px;
	height : 12px;
	border-bottom : 1px solid #CCCCCC;
  }
.crop-l
  {
	left : 34px;
	border-right : 1px solid #CCCCCC;
  }
.crop-r
  {
	left : 730px;
	border-left : 1px solid #CCCCCC;
  }
.nw
  {
	display : inline-block;
	white-space : nowrap;
	transform : scaleX(0.82);
	transform-origin : left center;
  }
.nwr
  {
	display : inline-block;
	white-space : nowrap;
	transform : scaleX(0.82);
	transform-origin : right center;
  }
.headbox
  {
	width : 685px;
	height : 82px;
	display : flex;
	box-sizing : border-box;
	border : 1px solid #BBBBBB;
  }
.headleft
  {
	width : 471px;
	flex : none;
	box-sizing : border-box;
	padding-left : 6px;
	border-right : 1px solid #BBBBBB;
  }
.company
  {
	margin-top : 5px;
	font-size : 38px;
	line-height : 44px;
	color : #8080D8;
  }
.squiggle
  {
	text-decoration : underline wavy #E00000 1px;
	text-underline-offset : 2px;
  }
.invoice
  {
	margin-top : 1px;
	font-size : 22.500px;
	line-height : 24px;
	color : #CCCCCC;
  }
.headright
  {
	flex : 1;
	padding : 13px 5px 0 0;
	text-align : right;
  }
.addr
  {
	font-size : 16px;
	line-height : 28px;
	font-weight : bold;
	letter-spacing : 0.250px;
	color : #333333;
  }
.clientbox
  {
	width : 685px;
	height : 115px;
	margin : 24px 0 0 5px;
	display : flex;
	box-sizing : border-box;
	border : 1px solid #BBBBBB;
	background-color : #D3D3FF;
	color : #2C2A66;
  }
.clientleft
  {
	width : 322px;
	flex : none;
	box-sizing : border-box;
	padding : 6px 0 0 11px;
	border-right : 1px solid #BBBBBB;
  }
.clientright
  {
	flex : 1;
	padding : 6px 10px 0 0;
	text-align : right;
  }
.cname
  {
	font-size : 14px;
	font-weight : bold;
	line-height : 24.500px;
  }
.cline
  {
	font-size : 14px;
	line-height : 24.500px;
  }
.receipt
  {
	font-size : 14px;
  }
.amount
  {
	margin-top : 2px;
	font-size : 38px;
	line-height : 50px;
	color : #008000;
  }
.notes
  {
	margin : 22px 0 0 -4px;
	width : 683px;
	height : 24px;
	border-bottom : 1px solid #DDDDDD;
	font-size : 18px;
	line-height : 22px;
	color : #666666;
  }
.notehint
  {
	margin : 32px 0 0 -4px;
	font-size : 14.500px;
	line-height : 20px;
	color : #DDDDDD;
  }
.items
  {
	margin : 30px 0 0 5px;
	width : 685px;
	table-layout : fixed;
	border-collapse : collapse;
	font-size : 14px;
	color : #777777;
  }
.col1
  {
	width : 326px;
  }
.col2
  {
	width : 108px;
  }
.col3
  {
	width : 112px;
  }
.items td
  {
	padding : 0 12px 0 11px;
	border : 1px solid #9A9A9A;
  }
.items td.r
  {
	text-align : right;
  }
.items td:nth-child(2), .items td:nth-child(3)
  {
	padding-right : 11px;
  }
.rowhead td:nth-child(3)
  {
	padding-right : 10px;
  }
.rowhead td, .rowtotal td
  {
	background-color : #999999;
	color : #FFFFFF;
	border-color : #999999;
  }
.rowhead td
  {
	height : 40px;
  }
.rowblank td
  {
	height : 37px;
	background-color : #FFFFFF;
  }
.rowgray td
  {
	height : 38.500px;
	background-color : #D8D8D8;
  }
.rowtotal td
  {
	height : 39px;
  }
.squiggle-b
  {
	text-decoration : underline wavy #0000D0 1px;
  }

/* scrollbar and sidebar */
.vscroll
  {
	width : 17px;
	flex : none;
	display : flex;
	flex-direction : column;
	background-color : #F0F0F0;
  }
.sbtn
  {
	height : 15px;
	flex : none;
	display : flex;
	align-items : center;
	justify-content : center;
  }
.sthumb
  {
	height : 655px;
	flex : none;
	background-color : #C8C8C8;
  }
.strack
  {
	flex : 1;
  }
.sidegrip
  {
	width : 7px;
	flex : none;
	display : flex;
	align-items : center;
	background-color : #F0F0F0;
	border-right : 1px solid #B4B4B4;
	box-sizing : border-box;
  }
.gripbar
  {
	width : 6px;
	height : 73px;
	margin-bottom : 3px;
	background-color : #555555;
  }
.sidebar
  {
	width : 40px;
	flex : none;
	display : flex;
	flex-direction : column;
	align-items : center;
	padding-top : 2px;
	box-sizing : border-box;
	background-color : #EFEFEF;
  }
.sbi
  {
	width : 31px;
	height : 35px;
	flex : none;
	display : flex;
	align-items : center;
	justify-content : center;
	box-sizing : border-box;
  }
.sbi-on
  {
	height : 32px;
	margin-bottom : 1px;
	border : 1px solid #B4B4B4;
	border-radius : 4px;
  }
.sbline
  {
	width : 22px;
	height : 1px;
	margin : 2px 0 2px;
	background-color : #D4D4D4;
  }

/* status bar */
.status
  {
	height : 22px;
	flex : none;
	display : flex;
	align-items : center;
	box-sizing : border-box;
	background-color : #EFEFEF;
	border-top : 2px solid #B4B4B4;
	font-size : 11px;
	color : #222222;
  }
.field
  {
	height : 17px;
	flex : none;
	display : flex;
	align-items : center;
	box-sizing : border-box;
	padding-left : 10px;
	border-left : 1px solid #999999;
	white-space : nowrap;
  }
.field.mid
  {
	justify-content : center;
	padding-left : 0;
  }
.f1
  {
	width : 278px;
	padding-left : 12px;
	border-left : 0;
  }
.f2
  {
	width : 376px;
  }
.f3
  {
	width : 286.500px;
  }
.f4
  {
	width : 290px;
  }
.f5
  {
	width : 69px;
  }
.f6
  {
	width : 30.500px;
	padding-left : 8px;
  }
.f7
  {
	width : 29px;
	padding-left : 9px;
  }
.f8
  {
	width : 30px;
  }
.f9
  {
	width : 269.500px;
  }
.f10
  {
	width : 76.500px;
	padding-left : 10px;
  }
.f11
  {
	width : 145px;
	padding-left : 9px;
	gap : 4px;
  }
.f12
  {
	padding-left : 7px;
  }
.zbtn
  {
	font-size : 18px;
	font-weight : bold;
	line-height : 17px;
	color : #666666;
  }
.zslider
  {
	position : relative;
	width : 98px;
	height : 2px;
	background-color : #777777;
  }
.ztick
  {
	position : absolute;
	left : 32px;
	top : -3px;
	width : 2px;
	height : 8px;
	background-color : #777777;
  }
.zthumb
  {
	position : absolute;
	left : 43px;
	top : -6px;
	width : 5px;
	height : 14px;
	background-color : #666666;
  }
.taskbar
  {
	height : 8px;
	flex : none;
	display : flex;
	overflow : hidden;
	background-color : #000000;
	width : 1916px;
  }
.tk
  {
	flex : none;
  }
.tk-black
  {
	width : 48px;
  }
.tk-light
  {
	width : 344px;
	background-color : #EFEFEF;
  }
.tk-black2
  {
	width : 639px;
  }
.tk-gray
  {
	width : 47px;
	background-color : #3C3C3C;
  }
.tk-clock
  {
	margin-left : 737px;
	height : 8px;
	padding-top : 5px;
	box-sizing : border-box;
	overflow : hidden;
	font-size : 11px;
	line-height : 14px;
	color : #DDDDDD;
  }

/* floating recorder window */
.recorder
  {
	position : absolute;
	left : 754px;
	top : 441px;
	width : 412px;
	height : 136px;
	box-sizing : border-box;
	background-color : #232324;
	border : 1px solid #0F5C96;
	box-shadow : 0 0 12px rgba(0, 0, 0, 0.4);
	color : #DDDDDD;
	font-size : 11px;
  }
.rechead
  {
	height : 33px;
	box-sizing : border-box;
	padding : 0 18px 2px 12px;
	display : flex;
	align-items : center;
	justify-content : space-between;
	background-color : #2D2D2F;
	color : #8A8A8A;
	font-size : 11.400px;
  }
.recbody
  {
	display : flex;
	padding : 5px 0 0 12px;
  }
.recgroup
  {
	display : flex;
	flex-direction : column;
  }
.recsep
  {
	width : 1px;
	height : 84px;
	margin-left : 1px;
	background-color : #3C3C3C;
  }
.rectools
  {
	display : flex;
	height : 72px;
  }
.tool
  {
	display : flex;
	flex-direction : column;
	align-items : center;
	flex : none;
	box-sizing : border-box;
	position : relative;
  }
.ti
  {
	display : block;
	flex : none;
  }
.tl
  {
	margin-top : 4px;
	line-height : 14px;
	text-align : center;
	white-space : nowrap;
  }
.tl-low
  {
	margin-top : 6px;
  }
.low
  {
	margin-top : 5px;
	margin-bottom : -1px;
  }
.low2
  {
	margin-top : 10px;
	margin-bottom : 4px;
  }
.low3
  {
	margin-top : 7px;
	margin-bottom : 1px;
  }
.da
  {
	display : block;
	margin-top : 3px;
	border-left : 3px solid transparent;
	border-right : 3px solid transparent;
	border-top : 3px solid #888888;
  }
.da-in
  {
	display : inline-block;
	margin : 0 0 2px 3px;
  }
.t-save
  {
	width : 38px;
	height : 66px;
	padding-top : 3px;
	background-color : #4A4A4F;
  }
.t-save .tl
  {
	margin-top : 5px;
	line-height : 12px;
  }
.t-record
  {
	width : 48px;
  }
.t-start
  {
	width : 46px;
	margin-left : 1px;
  }
.t-click
  {
	width : 30px;
  }
.t-type
  {
	width : 37px;
	height : 70px;
	margin : -2px 2px 0 5px;
	border : 1px solid #3A3A3A;
  }
.typeT
  {
	height : 34px;
	font-family : "Liberation Serif", serif;
	font-size : 46px;
	line-height : 34px;
	color : #050505;
  }
.typeline
  {
	width : 100%;
	height : 1px;
	background-color : #3A3A3A;
  }
.t-type .tl
  {
	margin-top : 1px;
	line-height : 15px;
  }
.t-copy
  {
	width : 35px;
  }
.copyA
  {
	font-size : 20px;
	font-weight : bold;
  }
.t-element
  {
	width : 46px;
	margin-left : 6px;
  }
.t-text
  {
	width : 40px;
	margin-left : 5px;
  }
.abi
  {
	font-family : "Liberation Sans", sans-serif;
	font-size : 13px;
	font-weight : bold;
	fill : #111111;
  }
.t-image
  {
	width : 40px;
	margin-left : 2px;
  }
.grouplabel
  {
	height : 16px;
	line-height : 16px;
	text-align : center;
	color : #777777;
	font-size : 11px;
  }
.actions
  {
	padding-left : 4px;
  }
.under
  {
	margin-left : -5px;
	border-bottom : 1px solid #4A4A4A;
  }
```
